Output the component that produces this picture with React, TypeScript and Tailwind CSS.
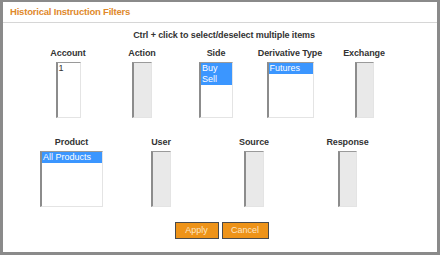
const font = { fontFamily: '"Liberation Sans", Arial, sans-serif' };

type Box = { label: string; w: number; items?: string[]; selected?: number[]; disabled?: boolean };

const row1: Box[] = [
  { label: "Account", w: 25, items: ["1"] },
  { label: "Action", w: 20, disabled: true },
  { label: "Side", w: 34, items: ["Buy", "Sell"], selected: [0, 1] },
  { label: "Derivative Type", w: 47, items: ["Futures"], selected: [0] },
  { label: "Exchange", w: 19, disabled: true },
];

const row2: Box[] = [
  { label: "Product", w: 63, items: ["All Products"], selected: [0] },
  { label: "User", w: 20, disabled: true },
  { label: "Source", w: 20, disabled: true },
  { label: "Response", w: 19, disabled: true },
];

const ListBox = ({ box }: { box: Box }) => (
  <div className="flex flex-col items-center">
    <div className="text-[9px] font-bold text-[#333] leading-[11px] h-[11px] tracking-[-0.1px]">{box.label}</div>
    <div
      className={
        "mt-[3px] h-[56px] border-l-[2px] border-t border-r border-b border-l-[#8c8c8c] border-t-[#9a9a9a] border-r-[#e4e4e4] border-b-[#e4e4e4] " +
        (box.disabled ? "bg-[#e9e9e9]" : "bg-white")
      }
      style={{ width: box.w }}
    >
      {box.items?.map((it, i) => (
        <div
          key={it}
          className={
            "text-[9px] leading-[11px] px-[1px] " +
            (box.selected?.includes(i) ? "bg-[#3b96ff] text-white" : "text-[#333]")
          }
        >
          {it}
        </div>
      ))}
    </div>
  </div>
);

export default function App() {
  return (
    <div className="w-[440px] h-[257px] bg-white" style={font}>
      <div className="h-[255px] border-l-[3px] border-r-[3px] border-t-2 border-b-[3px] border-[#8a8a8a] flex flex-col">
        <div className="h-[21px] border-b border-[#d6d6d6] px-[7px] flex items-center">
          <span className="text-[9.5px] font-bold text-[#e0892b] tracking-[-0.2px]">Historical Instruction Filters</span>
        </div>
        <div className="text-center text-[9px] font-bold text-[#333] mt-[7px] ml-[8px] leading-[11px] tracking-[-0.1px]">
          Ctrl + click to select/deselect multiple items
        </div>
        <div className="grid grid-cols-[74px_74px_74px_74px_74px] ml-[28px] mt-[7px]">
          {row1.map((b) => (
            <ListBox key={b.label} box={b} />
          ))}
        </div>
        <div className="grid grid-cols-[89px_90px_96px_91px] ml-[24px] mt-[19px]">
          {row2.map((b) => (
            <ListBox key={b.label} box={b} />
          ))}
        </div>
        <div className="flex justify-center gap-[3px] mt-[15px] ml-[3px]">
          <button className="w-[44px] h-[17px] bg-[#ee9318] border border-[#4a4a4a] text-[9px] text-[#fde6c4] leading-none">
            Apply
          </button>
          <button className="w-[47px] h-[17px] bg-[#ee9318] border border-[#4a4a4a] text-[9px] text-[#fde6c4] leading-none">
            Cancel
          </button>
        </div>
      </div>
    </div>
  );
}
